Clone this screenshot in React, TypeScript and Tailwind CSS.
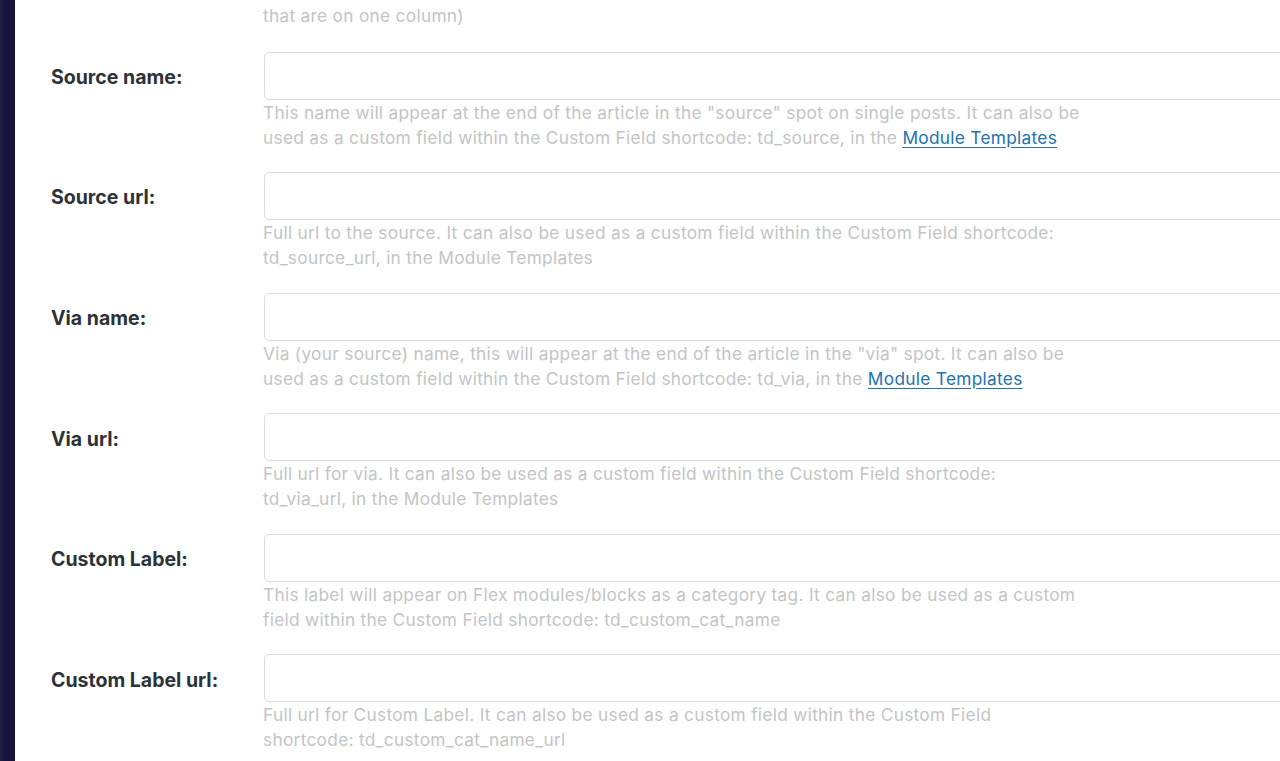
import type { ReactNode } from "react";

type Field = {
  label: string;
  lines: ReactNode[];
};

function TemplatesLink() {
  return (
    <a href="#" className="text-[#2271b1] underline underline-offset-[3px]">
      Module Templates
    </a>
  );
}

// lines are kept as in the screenshot so the wrapping stays put
const fields: Field[] = [
  {
    label: "Source name:",
    lines: [
      'This name will appear at the end of the article in the "source" spot on single posts. It can also be',
      <>
        used as a custom field within the Custom Field shortcode: td_source, in the <TemplatesLink />
      </>,
    ],
  },
  {
    label: "Source url:",
    lines: [
      "Full url to the source. It can also be used as a custom field within the Custom Field shortcode:",
      "td_source_url, in the Module Templates",
    ],
  },
  {
    label: "Via name:",
    lines: [
      'Via (your source) name, this will appear at the end of the article in the "via" spot. It can also be',
      <>
        used as a custom field within the Custom Field shortcode: td_via, in the <TemplatesLink />
      </>,
    ],
  },
  {
    label: "Via url:",
    lines: [
      "Full url for via. It can also be used as a custom field within the Custom Field shortcode:",
      "td_via_url, in the Module Templates",
    ],
  },
  {
    label: "Custom Label:",
    lines: [
      "This label will appear on Flex modules/blocks as a category tag. It can also be used as a custom",
      "field within the Custom Field shortcode: td_custom_cat_name",
    ],
  },
  {
    label: "Custom Label url:",
    lines: [
      "Full url for Custom Label. It can also be used as a custom field within the Custom Field",
      "shortcode: td_custom_cat_name_url",
    ],
  },
];

function FieldRow({ label, lines }: Field) {
  return (
    <div className="grid grid-cols-[213px_1fr] pb-[22.6px]">
      <div className="mt-[2px] flex h-[48px] items-center text-[19.5px] font-bold text-[#2c3338]">{label}</div>
      <div>
        <input
          type="text"
          className="block h-[48px] w-[1100px] rounded-[5px] border border-[#dcdcde] bg-white"
        />
        <p className="-ml-px text-[17.3px] leading-[25px] tracking-[0.017em] text-[#c3c4c7]">
          {lines.map((line, i) => (
            <span key={i} className="block whitespace-nowrap">
              {line}
            </span>
          ))}
        </p>
      </div>
    </div>
  );
}

export default function App() {
  return (
    <div
      className="flex h-[761px] w-[1280px] overflow-hidden bg-white"
      style={{ fontFamily: "Inter, 'Noto Sans', sans-serif" }}
    >
      <div className="w-[15px] shrink-0 bg-[linear-gradient(90deg,#24224a_0px,#16143a_4px,#16143a_100%)]" />
      <div className="min-w-0 flex-1 pl-[36px]">
        <div className="grid grid-cols-[213px_1fr] pb-[23.5px] pt-[3px]">
          <div />
          <p className="-ml-px text-[17.3px] leading-[25px] tracking-[0.017em] text-[#c3c4c7]">
            that are on one column)
          </p>
        </div>
        {fields.map((field) => (
          <FieldRow key={field.label} {...field} />
        ))}
      </div>
    </div>
  );
}
